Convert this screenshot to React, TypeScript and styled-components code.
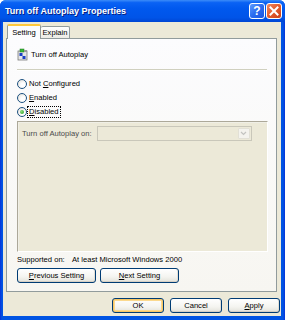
import React from "react";
import styled, { createGlobalStyle, css } from "styled-components";

const Global = createGlobalStyle`
  html, body { margin: 0; padding: 0; background: #ffffff; }
  body { font-family: "Liberation Sans", Arial, sans-serif; }
  * { box-sizing: border-box; }
`;

const Window = styled.div`
  width: 285px;
  height: 320px;
  display: flex;
  flex-direction: column;
  background: linear-gradient(to right, #0831d9 0px, #0054e3 2px, #0054e3 283px, #0831d9 285px);
  border-radius: 6px 6px 0 0;
  overflow: hidden;
`;

const TitleBar = styled.div`
  height: 22px;
  flex: none;
  display: flex;
  align-items: center;
  padding: 0 3px 0 5px;
  background: linear-gradient(
    to bottom,
    #3c8cf8 0%,
    #0a62f4 12%,
    #0058ee 40%,
    #0054e8 80%,
    #0046d4 100%
  );
`;

const Title = styled.span`
  flex: 1;
  color: #ffffff;
  font-weight: bold;
  font-size: 9px;
  text-shadow: 1px 1px 0 #0a1e82;
`;

const CaptionButton = styled.div<{ $kind: "help" | "close" }>`
  width: 16px;
  height: 16px;
  margin-left: 1px;
  border: 1px solid #ffffff;
  border-radius: 3px;
  display: flex;
  align-items: center;
  justify-content: center;
  color: #ffffff;
  font-weight: bold;
  font-size: 12px;
  line-height: 1;
  ${(p) =>
    p.$kind === "help"
      ? css`
          background: linear-gradient(135deg, #5f9bff 0%, #2a6cf0 50%, #1a55e0 100%);
        `
      : css`
          background: linear-gradient(135deg, #f08a63 0%, #e35a2c 50%, #c9401a 100%);
        `}
`;

const Body = styled.div`
  flex: 1;
  margin: 0 4px 4px 3px;
  background: #ece9d8;
  display: flex;
  flex-direction: column;
  padding: 2px 0 0 3px;
`;

const TabStrip = styled.div`
  display: flex;
  align-items: flex-end;
  height: 14px;
  padding-left: 1px;
  position: relative;
  z-index: 2;
`;

const Tab = styled.div<{ $active?: boolean }>`
  font-size: 7.6px;
  color: #000;
  display: flex;
  align-items: center;
  justify-content: center;
  border: 1px solid #919b9c;
  border-bottom: none;
  border-radius: 2px 2px 0 0;
  ${(p) =>
    p.$active
      ? css`
          width: 34px;
          height: 15px;
          margin-bottom: -1px;
          background: #fcfcfe;
          border-top: 2px solid #ffc83c;
          padding-bottom: 1px;
        `
      : css`
          width: 29px;
          height: 12px;
          background: linear-gradient(to bottom, #ffffff, #ecebe5);
          border-left: none;
        `}
`;

const Panel = styled.div`
  width: 271px;
  height: 254px;
  border: 1px solid #919b9c;
  background: linear-gradient(to bottom, #fcfcfe 0%, #f7f6f1 100%);
  display: flex;
  flex-direction: column;
  padding: 9px 9px 0 10px;
`;

const Header = styled.div`
  display: flex;
  align-items: center;
  gap: 2px;
  height: 13px;
  font-size: 7.6px;
`;

const Separator = styled.div`
  margin-top: 8px;
  height: 2px;
  width: 250px;
  border-top: 1px solid #d0d0bf;
  border-bottom: 1px solid #ffffff;
`;

const RadioGroup = styled.div`
  margin-top: 6px;
  display: flex;
  flex-direction: column;
`;

const RadioRow = styled.div`
  height: 14px;
  display: flex;
  align-items: center;
  gap: 0px;
  font-size: 7.6px;
`;

const RadioCircle = styled.span<{ $checked?: boolean }>`
  width: 10px;
  height: 10px;
  border-radius: 50%;
  border: 1px solid #1c5180;
  background: radial-gradient(circle at 65% 65%, #ffffff 30%, #dcdad2 100%);
  display: flex;
  align-items: center;
  justify-content: center;
  &::after {
    content: "";
    width: 4px;
    height: 4px;
    border-radius: 50%;
    background: ${(p) => (p.$checked ? "radial-gradient(circle at 35% 35%, #8bd97a, #21a121)" : "transparent")};
  }
`;

const Label = styled.span<{ $focus?: boolean }>`
  padding: 0 1px;
  border: 1px dotted ${(p) => (p.$focus ? "#000" : "transparent")};
  line-height: 10px;
`;

const U = styled.span`
  text-decoration: underline;
`;

const OptionsBox = styled.div`
  margin-top: 2px;
  width: 251px;
  height: 131px;
  background: #ece9d8;
  border: 1px solid #ffffff;
  border-top-color: #aca899;
  border-left-color: #aca899;
  box-shadow: inset 1px 1px 0 #f0efe6;
  padding: 4px 0 0 4px;
`;

const OptionRow = styled.div`
  display: flex;
  align-items: center;
  gap: 5px;
  font-size: 7.6px;
  color: #4a4a4a;
`;

const Combo = styled.div`
  width: 155px;
  height: 15px;
  border: 1px solid #c9c7ba;
  background: #ece9d8;
  display: flex;
  justify-content: flex-end;
  padding: 1px;
`;

const ComboButton = styled.div`
  width: 12px;
  height: 11px;
  border: 1px solid #e2e0d6;
  border-radius: 1px;
  background: #f4f3ee;
  display: flex;
  align-items: center;
  justify-content: center;
`;

const SupportRow = styled.div`
  margin-top: 2px;
  height: 10px;
  display: flex;
  align-items: center;
  font-size: 7.6px;
  color: #000;
`;

const SupportKey = styled.span`
  width: 55px;
`;

const ButtonRow = styled.div<{ $end?: boolean }>`
  display: flex;
  gap: ${(p) => (p.$end ? "6px" : "4px")};
  justify-content: ${(p) => (p.$end ? "flex-end" : "flex-start")};
`;

const Button = styled.div<{ $w: number; $default?: boolean }>`
  width: ${(p) => p.$w}px;
  height: 15px;
  border: 1px solid #003c74;
  border-radius: 3px;
  background: linear-gradient(to bottom, #ffffff 0%, #f4f4f0 60%, #e3e2da 100%);
  display: flex;
  align-items: center;
  justify-content: center;
  font-size: 7.6px;
  color: #000;
  ${(p) =>
    p.$default
      ? css`
          box-shadow: inset 0 0 0 1px #f8c766, inset 0 0 0 2px #fbd98f;
        `
      : css`
          box-shadow: inset 0 -1px 0 #d6d0c5, inset -1px 0 0 #e2dfd6;
        `}
`;

const Footer = styled.div`
  margin-top: 6px;
  width: 274px;
`;

const PanelButtons = styled.div`
  margin-top: 4px;
`;

function PolicyIcon() {
  return (
    <svg width="12" height="13" viewBox="0 0 12 13">
      <rect x="1" y="3" width="9" height="9" fill="#e6e6e6" stroke="#7a7a7a" strokeWidth="0.8" />
      <rect x="2.5" y="5" width="3" height="3" fill="#1a3fc4" />
      <rect x="5.5" y="8" width="3" height="3" fill="#1a3fc4" />
      <rect x="3" y="1" width="4" height="3" fill="#38b838" stroke="#1d7a1d" strokeWidth="0.5" />
      <rect x="7" y="2" width="3" height="2" fill="#9a9a9a" />
    </svg>
  );
}

export default function App() {
  return (
    <>
      <Global />
      <Window>
        <TitleBar>
          <Title>Turn off Autoplay Properties</Title>
          <CaptionButton $kind="help">?</CaptionButton>
          <CaptionButton $kind="close">
            <svg width="10" height="10" viewBox="0 0 10 10">
              <path d="M1.5 1.5 L8.5 8.5 M8.5 1.5 L1.5 8.5" stroke="#fff" strokeWidth="2" strokeLinecap="square" />
            </svg>
          </CaptionButton>
        </TitleBar>
        <Body>
          <TabStrip>
            <Tab $active>Setting</Tab>
            <Tab>Explain</Tab>
          </TabStrip>
          <Panel>
            <Header>
              <PolicyIcon />
              <span>Turn off Autoplay</span>
            </Header>
            <Separator />
            <RadioGroup>
              <RadioRow>
                <RadioCircle />
                <Label>
                  Not <U>C</U>onfigured
                </Label>
              </RadioRow>
              <RadioRow>
                <RadioCircle />
                <Label>
                  <U>E</U>nabled
                </Label>
              </RadioRow>
              <RadioRow>
                <RadioCircle $checked />
                <Label $focus>
                  <U>D</U>isabled
                </Label>
              </RadioRow>
            </RadioGroup>
            <OptionsBox>
              <OptionRow>
                <span>Turn off Autoplay on:</span>
                <Combo>
                  <ComboButton>
                    <svg width="7" height="5" viewBox="0 0 7 5">
                      <path d="M1 1 L3.5 3.5 L6 1" fill="none" stroke="#c3c3c0" strokeWidth="1.2" />
                    </svg>
                  </ComboButton>
                </Combo>
              </OptionRow>
            </OptionsBox>
            <SupportRow>
              <SupportKey>Supported on:</SupportKey>
              <span>At least Microsoft Windows 2000</span>
            </SupportRow>
            <PanelButtons>
              <ButtonRow>
                <Button $w={79}>
                  <span>
                    <U>P</U>revious Setting
                  </span>
                </Button>
                <Button $w={79}>
                  <span>
                    <U>N</U>ext Setting
                  </span>
                </Button>
              </ButtonRow>
            </PanelButtons>
          </Panel>
          <Footer>
            <ButtonRow $end>
              <Button $w={52} $default>
                OK
              </Button>
              <Button $w={52}>Cancel</Button>
              <Button $w={52}>
                <span>
                  <U>A</U>pply
                </span>
              </Button>
            </ButtonRow>
          </Footer>
        </Body>
      </Window>
    </>
  );
}
